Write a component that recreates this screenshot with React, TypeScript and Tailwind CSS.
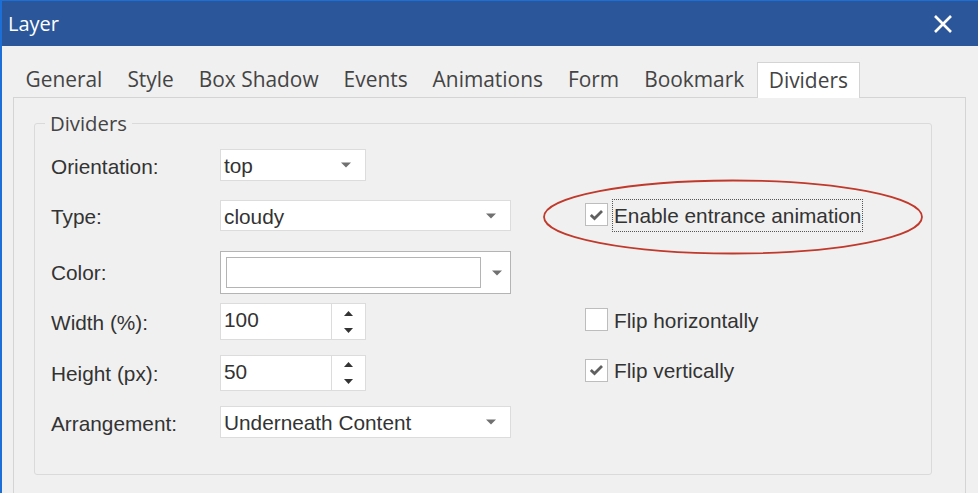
import { useState } from 'react'

const tabs = ['General', 'Style', 'Box Shadow', 'Events', 'Animations', 'Form', 'Bookmark', 'Dividers']

function Arrow() {
  return (
    <svg width="10" height="6" viewBox="0 0 10 6" className="shrink-0">
      <path d="M0 0.5 L10 0.5 L5 5.5 Z" fill="#707070" />
    </svg>
  )
}

function Select({ value, w }: { value: string; w: string }) {
  return (
    <div className={`${w} h-full bg-white border border-[#dcdcdc] flex items-center justify-between pl-[3px] pr-[14px]`}>
      <span className="text-[#333] translate-y-[1px]">{value}</span>
      <Arrow />
    </div>
  )
}

function Spin({ value }: { value: string }) {
  return (
    <div className="w-[146px] h-full flex bg-white border border-[#dcdcdc]">
      <div className="flex-1 pl-[3px] pt-[2px] text-[#333] leading-[28px]">{value}</div>
      <div className="w-[34px] border-l border-[#dcdcdc] flex flex-col items-center justify-center gap-[12px]">
        <svg width="9" height="5" viewBox="0 0 9 5"><path d="M0 5 L9 5 L4.5 0 Z" fill="#333" /></svg>
        <svg width="9" height="5" viewBox="0 0 9 5"><path d="M0 0 L9 0 L4.5 5 Z" fill="#333" /></svg>
      </div>
    </div>
  )
}

function Check({ checked, label, focus }: { checked: boolean; label: string; focus?: boolean }) {
  return (
    <div className="flex items-center gap-[5px]">
      <div className="w-[23px] h-[23px] bg-white border border-[#bdbdbd] flex items-center justify-center">
        {checked && (
          <svg width="15" height="12" viewBox="0 0 15 12">
            <path d="M1.8 6 L5.5 9.5 L13 2" fill="none" stroke="#606060" strokeWidth="2.8" />
          </svg>
        )}
      </div>
      <span className={`text-[#333] px-[1px] translate-y-[1px] ${focus ? 'outline-1 outline-dotted outline-[#555]' : ''}`}>{label}</span>
    </div>
  )
}

export default function App() {
  const [active] = useState('Dividers')

  return (
    <div className="w-[978px] h-[493px] overflow-hidden flex flex-col bg-[#2b579a] border-l-2 border-t border-[#1d6fd8]">
      <div className="h-[45px] shrink-0 flex items-center justify-between pl-[6px] pr-[26px]">
        <span className="text-white text-[20px] font-['Open_Sans',sans-serif]">Layer</span>
        <svg width="18" height="18" viewBox="0 0 18 18">
          <path d="M1 1 L17 17 M17 1 L1 17" stroke="#fff" strokeWidth="2.6" />
        </svg>
      </div>

      <div className="flex-1 bg-[#f0f0f0] pl-[11px] pt-[15px] font-['Liberation_Sans',Arial,sans-serif] text-[20.8px]">
        <div className="flex items-end h-[36px] font-['Open_Sans',sans-serif] text-[20.9px] text-[#444]">
          {tabs.map((t) =>
            t === active ? (
              <div key={t} className="relative z-10 -mb-px h-[36px] px-[11px] bg-white border border-b-0 border-[#d4d4d4] flex items-center">
                {t}
              </div>
            ) : (
              <div key={t} className="h-[34px] px-[12.5px] flex items-center">
                {t}
              </div>
            )
          )}
        </div>

        <div className="w-[953px] h-[400px] border border-[#d4d4d4] pl-[20px] pt-[13px]">
          <fieldset className="relative w-[898px] h-[364px] border border-[#dadada] rounded-[3px] pl-[16px]">
            <legend className="ml-[-6px] px-[5px] font-['Open_Sans',sans-serif] text-[20.3px] text-[#444] leading-[24px]">Dividers</legend>

            <div className="grid grid-cols-[169px_291px_1fr] text-[#333] mt-[14px]">
              <div className="h-[32px] flex items-center pt-[4px]">Orientation:</div>
              <div className="h-[32px]"><Select value="top" w="w-[146px]" /></div>
              <div />

              <div className="mt-[19px] h-[31px] flex items-center pt-[3px]">Type:</div>
              <div className="mt-[19px] h-[31px]"><Select value="cloudy" w="w-[291px]" /></div>
              <div className="mt-[19px] h-[31px] flex items-center pl-[74px] -translate-y-[1px]">
                <Check checked label="Enable entrance animation" focus />
              </div>

              <div className="mt-[20px] h-[43px] flex items-center pt-[1px]">Color:</div>
              <div className="mt-[20px] h-[43px] bg-white border border-[#b4b4b4] flex items-center pl-[5px] pr-[8px] gap-[11px]">
                <div className="w-[255px] h-[31px] bg-white border border-[#b4b4b4]" />
                <Arrow />
              </div>
              <div className="mt-[20px]" />

              <div className="mt-[9px] h-[37px] flex items-center pt-[2px]">Width (%):</div>
              <div className="mt-[9px] h-[37px]"><Spin value="100" /></div>
              <div className="mt-[9px] h-[37px] flex items-center pl-[74px] -translate-y-[2px]">
                <Check checked={false} label="Flip horizontally" />
              </div>

              <div className="mt-[15px] h-[36px] flex items-center pt-[2px]">Height (px):</div>
              <div className="mt-[15px] h-[36px]"><Spin value="50" /></div>
              <div className="mt-[15px] h-[36px] flex items-center pl-[74px] -translate-y-[3px]">
                <Check checked label="Flip vertically" />
              </div>

              <div className="mt-[15px] h-[32px] flex items-center pt-[3px]">Arrangement:</div>
              <div className="mt-[15px] h-[32px]"><Select value="Underneath Content" w="w-[291px]" /></div>
              <div className="mt-[15px]" />
            </div>

            <svg className="absolute left-[506px] top-[42px] pointer-events-none" width="384" height="80" viewBox="0 0 384 80">
              <ellipse cx="192" cy="40" rx="189" ry="36.5" fill="none" stroke="#c0392b" strokeWidth="1.8" />
            </svg>
          </fieldset>
        </div>
      </div>
    </div>
  )
}
